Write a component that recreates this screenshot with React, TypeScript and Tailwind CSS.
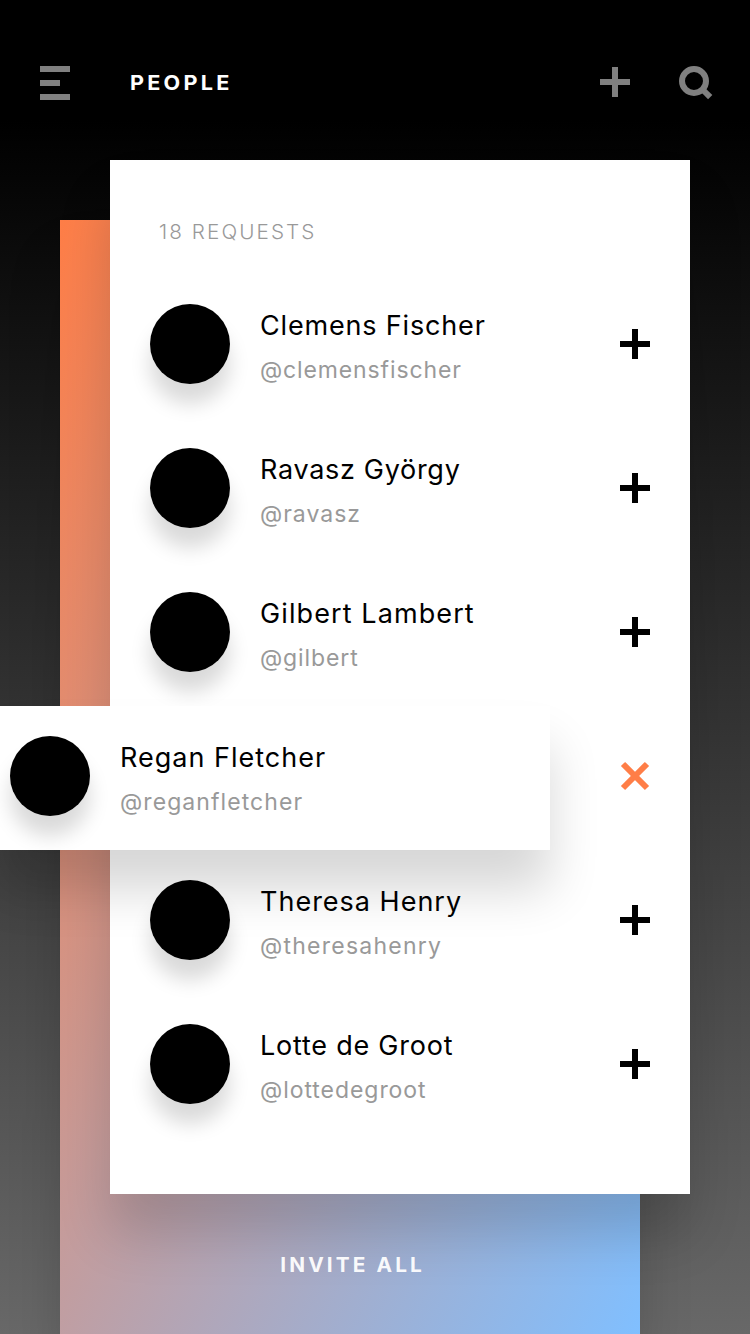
type Person = {
  name: string;
  handle: string;
  nameTracking: string;
  handleTracking: string;
  dismissed?: boolean;
};

const people: Person[] = [
  { name: "Clemens Fischer", handle: "@clemensfischer", nameTracking: "tracking-[0.83px]", handleTracking: "tracking-[0.87px]" },
  { name: "Ravasz György", handle: "@ravasz", nameTracking: "tracking-[0.7px]", handleTracking: "tracking-[1px]" },
  { name: "Gilbert Lambert", handle: "@gilbert", nameTracking: "tracking-[1.1px]", handleTracking: "tracking-[0.9px]" },
  { name: "Regan Fletcher", handle: "@reganfletcher", nameTracking: "tracking-[1px]", handleTracking: "tracking-[1.08px]", dismissed: true },
  { name: "Theresa Henry", handle: "@theresahenry", nameTracking: "tracking-[1px]", handleTracking: "tracking-[1.25px]" },
  { name: "Lotte de Groot", handle: "@lottedegroot", nameTracking: "tracking-[0.77px]", handleTracking: "tracking-[0.95px]" },
];

function PlusIcon() {
  return (
    <svg width="30" height="30" viewBox="0 0 30 30" fill="currentColor" className="block">
      <path d="M12 0h6v12h12v6H18v12h-6V18H0v-6h12z" />
    </svg>
  );
}

function CloseIcon() {
  return (
    <svg width="30" height="30" viewBox="0 0 30 30" stroke="currentColor" strokeWidth="6" className="block">
      <path d="M3 3L27 27M27 3L3 27" />
    </svg>
  );
}

function MenuIcon() {
  return (
    <svg width="30" height="34" viewBox="0 0 30 34" fill="currentColor" className="block">
      <path d="M0 0h30v6H0zM0 14h20v6H0zM0 28h30v6H0z" />
    </svg>
  );
}

function SearchIcon() {
  return (
    <svg width="34" height="34" viewBox="0 0 34 34" fill="none" stroke="currentColor" className="block">
      <circle cx="15" cy="15" r="12" strokeWidth="6" />
      <path d="M23 23l8.2 8.2" strokeWidth="6" />
    </svg>
  );
}

function Profile({ person }: { person: Person }) {
  return (
    <>
      <div className="size-20 shrink-0 rounded-full bg-black shadow-[0_20px_20px_rgba(0,0,0,0.15)]" />
      <div className="ml-[30px] flex flex-col whitespace-nowrap pt-1">
        <span className={`text-[27px] leading-9 text-black ${person.nameTracking}`}>{person.name}</span>
        <span className={`mt-2.5 text-[23px] leading-8 text-[#999] ${person.handleTracking}`}>{person.handle}</span>
      </div>
    </>
  );
}

function PersonRow({ person }: { person: Person }) {
  if (person.dismissed) {
    return (
      <li className="-ml-[110px] flex h-36 pr-10">
        <div className="flex w-[550px] items-start bg-white pl-2.5 pt-[30px] shadow-[0_40px_50px_rgba(0,0,0,0.16)]">
          <Profile person={person} />
        </div>
        <button className="ml-auto mt-[55px] size-[30px] text-[#ff7e47]" aria-label="Dismiss">
          <CloseIcon />
        </button>
      </li>
    );
  }
  return (
    <li className="flex h-36 items-start px-10 pt-[30px]">
      <Profile person={person} />
      <button className="ml-auto mt-[25px] size-[30px] text-black" aria-label="Accept">
        <PlusIcon />
      </button>
    </li>
  );
}

export default function App() {
  return (
    <div className="flex h-[1334px] w-[750px] flex-col overflow-hidden bg-[linear-gradient(180deg,#000_120px,#686868_1334px)] font-['Inter',sans-serif]">
      <header className="flex h-40 shrink-0 items-start pl-10 pr-[37px] pt-[66px] text-[#808080]">
        <MenuIcon />
        <h1 className="ml-[60px] mt-[3px] origin-left scale-x-[1.08] text-[20px] font-bold leading-7 tracking-[3px] text-white">
          PEOPLE
        </h1>
        <div className="ml-auto mt-px">
          <PlusIcon />
        </div>
        <div className="ml-[49px]">
          <SearchIcon />
        </div>
      </header>
      <main className="grid h-[1174px] shrink-0 grid-cols-1 grid-rows-1">
        <section className="col-start-1 row-start-1 ml-[60px] mt-[60px] flex w-[580px] flex-col items-center justify-end bg-[linear-gradient(to_bottom_right,#ff7e47,#80bfff)] pb-[55px] shadow-[0_40px_50px_rgba(0,0,0,0.16)]">
          <button className="ml-[5px] scale-x-[1.04] text-[20px] font-bold leading-7 tracking-[3px] text-white/95">
            INVITE ALL
          </button>
        </section>
        <section className="col-start-1 row-start-1 ml-[110px] h-[1034px] w-[580px] bg-white pt-[58px] shadow-[0_40px_50px_rgba(0,0,0,0.16)]">
          <h2 className="ml-[49px] w-max origin-left scale-x-[1.035] text-[20px] font-light leading-7 tracking-[2px] text-[#999]">
            18 REQUESTS
          </h2>
          <ul className="mt-7">
            {people.map((person) => (
              <PersonRow key={person.handle} person={person} />
            ))}
          </ul>
        </section>
      </main>
    </div>
  );
}
